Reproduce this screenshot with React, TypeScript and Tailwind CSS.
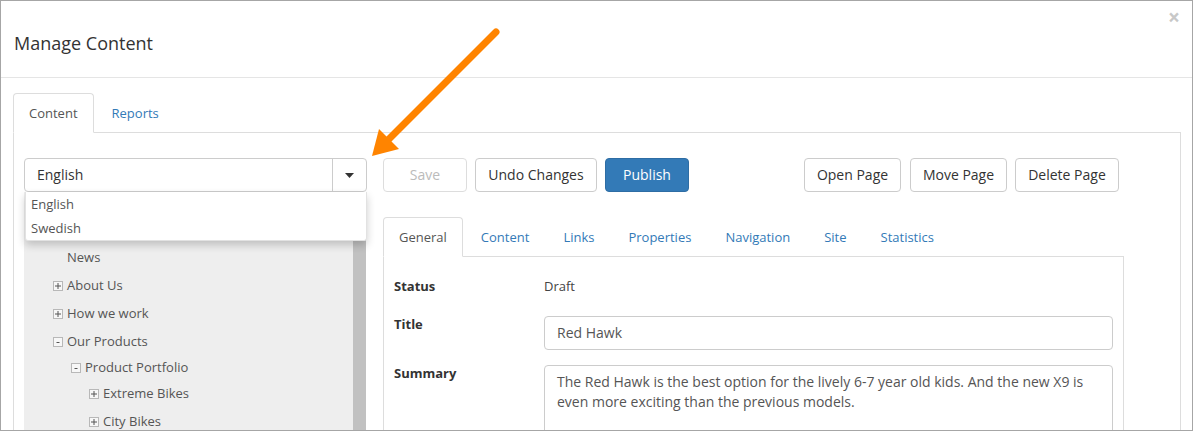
import React from 'react';

const font = { fontFamily: '"Open Sans", "Liberation Sans", sans-serif' };

type Node = { label: string; level: number; toggle?: '+' | '-'; h: number };

const tree: Node[] = [
  { label: 'News', level: 1, h: 28 },
  { label: 'About Us', level: 1, toggle: '+', h: 28 },
  { label: 'How we work', level: 1, toggle: '+', h: 28 },
  { label: 'Our Products', level: 1, toggle: '-', h: 28 },
  { label: 'Product Portfolio', level: 2, toggle: '-', h: 24 },
  { label: 'Extreme Bikes', level: 3, toggle: '+', h: 28 },
  { label: 'City Bikes', level: 3, toggle: '+', h: 28 },
];

const pagePadding: Record<number, string> = { 1: 'pl-[29px]', 2: 'pl-[47px]', 3: 'pl-[65px]' };

const Toggle = ({ sign }: { sign: '+' | '-' }) => (
  <span className="w-[10px] h-[10px] border border-[#b8b8b8] bg-[#f7f7f7] flex items-center justify-center mr-[4px] shrink-0">
    {sign === '+' ? (
      <svg width="8" height="8" viewBox="0 0 8 8">
        <path d="M4 1v6M1 4h6" stroke="#555" strokeWidth="1" />
      </svg>
    ) : (
      <svg width="8" height="8" viewBox="0 0 8 8">
        <path d="M2.5 4.5h3" stroke="#555" strokeWidth="1" />
      </svg>
    )}
  </span>
);

type Variant = 'default' | 'disabled' | 'primary';

const variants: Record<Variant, string> = {
  default: 'bg-white border-[#ccc] text-[#333]',
  disabled: 'bg-white border-[#ddd] text-[#bbb]',
  primary: 'bg-[#337ab7] border-[#2e6da4] text-white',
};

const Btn = ({ children, className = '', variant = 'default' }: { children: React.ReactNode; className?: string; variant?: Variant }) => (
  <button className={`h-[34px] border rounded-[4px] text-[14px] flex items-center justify-center pb-[1px] ${variants[variant]} ${className}`}>
    {children}
  </button>
);

const innerTabs = ['General', 'Content', 'Links', 'Properties', 'Navigation', 'Site', 'Statistics'];

export default function App() {
  return (
    <div style={font} className="relative w-[1193px] h-[431px] border border-[#a6a6a6] bg-white overflow-hidden">
      {/* modal header */}
      <div className="h-[77px] border-b border-[#e5e5e5] px-[13px] pt-[29px]">
        <h4 className="text-[18px] leading-[26px] text-[#333]">Manage Content</h4>
      </div>
      <span className="absolute right-[12px] top-[1px] text-[21px] font-bold text-[#c8c8c8] leading-[30px]">×</span>

      <div className="ml-[12px] w-[1168px] mt-[15px]">
        {/* top tabs */}
        <div className="flex border-b border-[#ddd] h-[40px]">
          <div className="h-[40px] px-[15px] pt-[2px] border border-[#ddd] border-b-white rounded-t-[4px] bg-white text-[13px] text-[#555] flex items-center -mb-px">
            Content
          </div>
          <div className="h-[40px] px-[15px] pt-[2px] ml-[2px] text-[13px] text-[#337ab7] flex items-center border border-transparent">
            Reports
          </div>
        </div>

        <div className="border-x border-[#ddd] pl-[10px] pt-[25px] flex h-[400px]">
          {/* left column */}
          <div className="w-[343px] relative">
            <div className="h-[34px] border border-[#ccc] rounded-[4px] flex">
              <div className="flex-1 pl-[12px] pb-[1px] flex items-center text-[14px] text-[#333]">English</div>
              <div className="w-[34px] border-l border-[#ccc] flex items-center justify-center">
                <svg width="9" height="5" viewBox="0 0 9 5">
                  <path d="M0 0h9L4.5 5z" fill="#333" />
                </svg>
              </div>
            </div>

            <div className="flex w-[342px] h-[300px]">
              <div className="flex-1 bg-[#eeeeee] pt-[52px]">
                {tree.map((n) => (
                  <div
                    key={n.label}
                    style={{ height: n.h }}
                    className={`flex items-center text-[13px] text-[#555] ${pagePadding[n.level]} ${n.toggle ? '' : 'pl-[43px]'}`}
                  >
                    {n.toggle && <Toggle sign={n.toggle} />}
                    {n.label}
                  </div>
                ))}
              </div>
              <div className="w-[13px] bg-[#c1c1c1]" />
            </div>

            {/* open language dropdown */}
            <div className="absolute left-[1px] top-[34px] w-[342px] bg-white rounded-b-[3px] shadow-[0_4px_8px_rgba(0,0,0,0.2)] border border-[#e2e2e2] border-t-0">
              <div className="h-[24px] pl-[5px] pt-[2px] flex items-center text-[13px] text-[#555]">English</div>
              <div className="h-[24px] pl-[5px] pt-[2px] flex items-center text-[13px] text-[#555]">Swedish</div>
            </div>
          </div>

          {/* right column */}
          <div className="ml-[16px] w-[741px]">
            <div className="flex">
              <Btn variant="disabled" className="w-[84px]">Save</Btn>
              <Btn className="w-[122px] ml-[8px]">Undo Changes</Btn>
              <Btn variant="primary" className="w-[84px] ml-[8px]">Publish</Btn>
              <div className="flex-1" />
              <Btn className="w-[97px]">Open Page</Btn>
              <Btn className="w-[97px] ml-[9px]">Move Page</Btn>
              <Btn className="w-[104px] ml-[8px] mr-[5px]">Delete Page</Btn>
            </div>

            <div className="mt-[25px] flex border-b border-[#ddd] h-[40px]">
              {innerTabs.map((t, i) => (
                <div
                  key={t}
                  className={`h-[40px] px-[15px] pt-[2px] flex items-center text-[13px] border rounded-t-[4px] ${
                    i === 0
                      ? 'border-[#ddd] border-b-white bg-white text-[#555] -mb-px'
                      : 'border-transparent text-[#337ab7] ml-[2px]'
                  }`}
                >
                  {t}
                </div>
              ))}
            </div>

            <div className="border-x border-[#ddd] h-[200px] pl-[10px] pr-[10px] pt-[19px] text-[#333]">
              <div className="flex items-start">
                <div className="w-[150px] text-[13px] font-bold leading-[20px]">Status</div>
                <div className="text-[13px] leading-[20px] text-[#444]">Draft</div>
              </div>
              <div className="flex items-start mt-[18px]">
                <div className="w-[150px] text-[13px] font-bold leading-[20px]">Title</div>
                <div className="flex-1 mt-[2px] h-[34px] border border-[#ccc] rounded-[4px] px-[12px] pb-[1px] flex items-center text-[14px] text-[#555]">
                  Red Hawk
                </div>
              </div>
              <div className="flex items-start mt-[13px]">
                <div className="w-[150px] text-[13px] font-bold leading-[20px]">Summary</div>
                <div className="flex-1 mt-[2px] h-[90px] border border-[#ccc] rounded-[4px] px-[12px] pt-[6px] text-[14px] leading-[20px] text-[#555]">
                  <div>The Red Hawk is the best option for the lively 6-7 year old kids. And the new X9 is</div>
                  <div>even more exciting than the previous models.</div>
                </div>
              </div>
            </div>
          </div>
        </div>
      </div>

      {/* callout arrow */}
      <svg className="absolute left-0 top-0 pointer-events-none" width="1193" height="431">
        <line x1="495" y1="31" x2="386" y2="140" stroke="#ff8400" strokeWidth="7" strokeLinecap="round" />
        <polygon points="371,155 378,128 398,148" fill="#ff8400" />
      </svg>
    </div>
  );
}
